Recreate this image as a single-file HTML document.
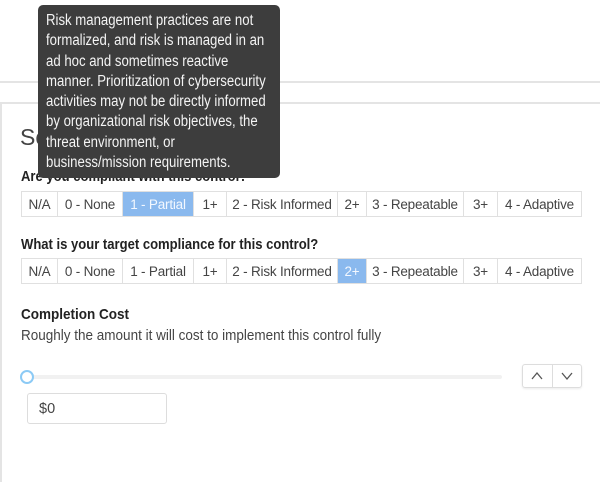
<!DOCTYPE html>
<html><head><style>
*{box-sizing:border-box;margin:0;padding:0}
body{width:600px;height:461px;overflow:hidden;background:#fff;font-family:"Liberation Sans",sans-serif;color:#333;position:relative}
.a{position:absolute}
.s{display:inline-block;transform-origin:left top;white-space:nowrap}
.hl{left:0;width:600px;height:2px;background:#e4e4e4}
.card{left:0;top:102px;width:602px;height:380px;border-left:2px solid #e4e4e4;border-top:2px solid #e4e4e4}
.row{display:flex;left:21px;height:26px;border:1px solid #e0e0e0}
.row div{border-right:1px solid #e0e0e0;font-size:13.5px;color:#444;display:flex;align-items:center;justify-content:center;height:100%;letter-spacing:-0.2px}
.row div:last-child{border-right:none}
.row .on{background:#8ab9ee;color:#f3f8ff}
.q{font-size:15px;font-weight:bold;color:#222;left:21px}
.tip{left:38px;top:5px;width:242px;height:173px;background:#3d3d3d;border-radius:5px;color:#f4f4f4;font-size:15.5px;line-height:20.3px;padding:6px 0 0 8px;white-space:nowrap;overflow:hidden}
</style></head><body>
<div class="a hl" style="top:81px"></div>
<div class="a card"></div>
<div class="a" style="left:20px;top:124px;font-size:23px;color:#444">Scoring</div>
<div class="a q" style="top:168px"><span class="s" style="transform:scaleX(0.87)">Are you compliant with this control?</span></div>
<div class="a row" style="top:191px;width:561px">
<div style="width:36px">N/A</div><div style="width:65px">0 - None</div><div class="on" style="width:71px">1 - Partial</div><div style="width:33px">1+</div><div style="width:111px">2 - Risk Informed</div><div style="width:29px">2+</div><div style="width:97px">3 - Repeatable</div><div style="width:34px">3+</div><div style="width:83px">4 - Adaptive</div></div>
<div class="a q" style="top:236px"><span class="s" style="transform:scaleX(0.87)">What is your target compliance for this control?</span></div>
<div class="a row" style="top:258px;width:561px">
<div style="width:36px">N/A</div><div style="width:65px">0 - None</div><div style="width:71px">1 - Partial</div><div style="width:33px">1+</div><div style="width:111px">2 - Risk Informed</div><div class="on" style="width:29px">2+</div><div style="width:97px">3 - Repeatable</div><div style="width:34px">3+</div><div style="width:83px">4 - Adaptive</div></div>
<div class="a q" style="top:306px"><span class="s" style="transform:scaleX(0.9)">Completion Cost</span></div>
<div class="a" style="left:21px;top:327px;font-size:15px;color:#444"><span class="s" style="transform:scaleX(0.9)">Roughly the amount it will cost to implement this control fully</span></div>
<div class="a" style="left:27px;top:375px;width:475px;height:4px;background:#f1f1f1;border-radius:2px"></div>
<div class="a" style="left:20px;top:370px;width:14px;height:14px;border:2.5px solid #8ccaf5;border-radius:50%;background:#fff"></div>
<div class="a" style="left:522px;top:364px;width:60px;height:24px;border:1px solid #ddd;border-radius:3px;box-shadow:0 1px 2px rgba(0,0,0,.08)"></div>
<div class="a" style="left:552px;top:364px;width:1px;height:24px;background:#ddd"></div>
<svg class="a" style="left:522px;top:364px" width="60" height="24"><path d="M10 15 L15 9 L20 15" fill="none" stroke="#555" stroke-width="1.3"/><path d="M40 9 L45 15 L50 9" fill="none" stroke="#555" stroke-width="1.3"/></svg>
<div class="a" style="left:27px;top:393px;width:140px;height:31px;border:1px solid #ddd;border-radius:3px;font-size:14.5px;color:#444;padding:7px 0 0 11px">$0</div>
<div class="a tip"><span class="s" style="transform:scaleX(0.85)">Risk management practices are not<br>formalized, and risk is managed in an<br>ad hoc and sometimes reactive<br>manner. Prioritization of cybersecurity<br>activities may not be directly informed<br>by organizational risk objectives, the<br>threat environment, or<br>business/mission requirements.</span></div>
</body></html>
